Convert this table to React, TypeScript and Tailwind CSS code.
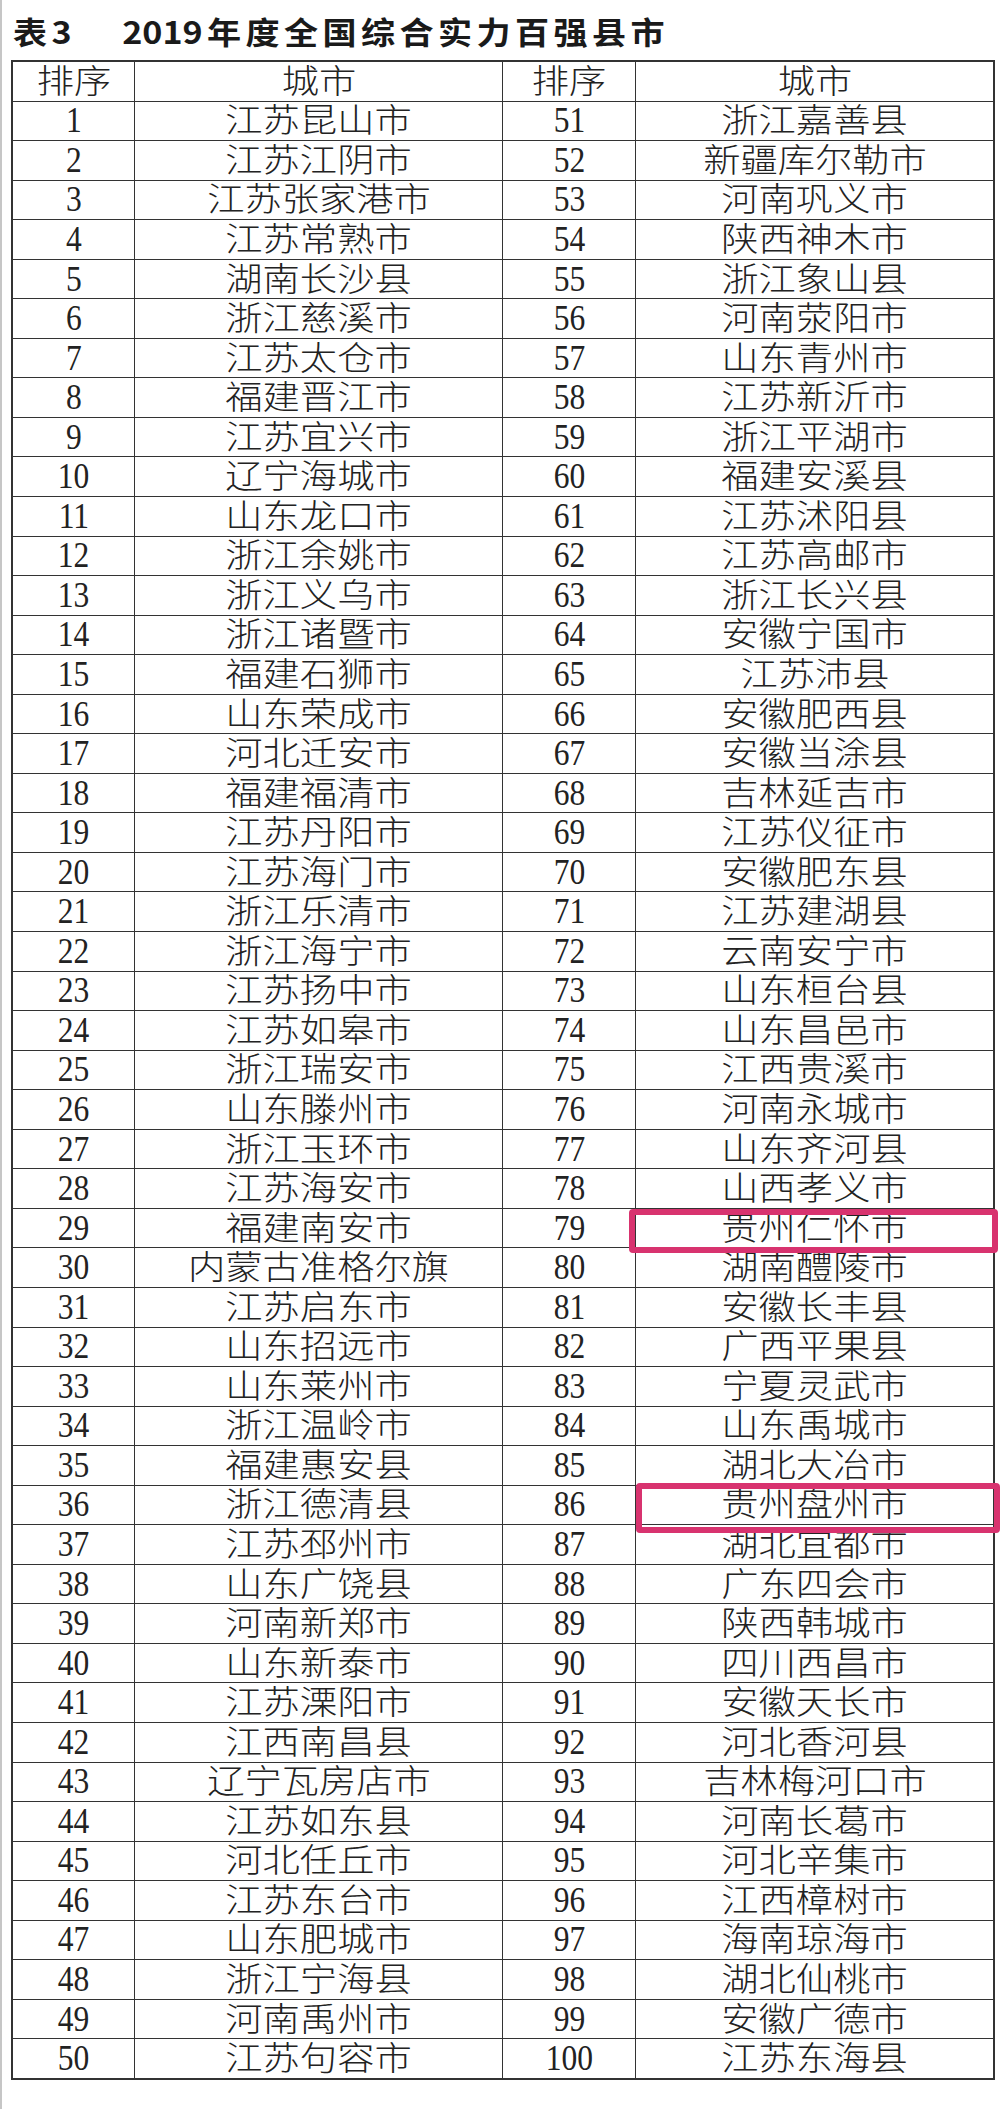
import React from 'react';

const left: [number, string][] = [
  [1, '江苏昆山市'], [2, '江苏江阴市'], [3, '江苏张家港市'], [4, '江苏常熟市'], [5, '湖南长沙县'],
  [6, '浙江慈溪市'], [7, '江苏太仓市'], [8, '福建晋江市'], [9, '江苏宜兴市'], [10, '辽宁海城市'],
  [11, '山东龙口市'], [12, '浙江余姚市'], [13, '浙江义乌市'], [14, '浙江诸暨市'], [15, '福建石狮市'],
  [16, '山东荣成市'], [17, '河北迁安市'], [18, '福建福清市'], [19, '江苏丹阳市'], [20, '江苏海门市'],
  [21, '浙江乐清市'], [22, '浙江海宁市'], [23, '江苏扬中市'], [24, '江苏如皋市'], [25, '浙江瑞安市'],
  [26, '山东滕州市'], [27, '浙江玉环市'], [28, '江苏海安市'], [29, '福建南安市'], [30, '内蒙古准格尔旗'],
  [31, '江苏启东市'], [32, '山东招远市'], [33, '山东莱州市'], [34, '浙江温岭市'], [35, '福建惠安县'],
  [36, '浙江德清县'], [37, '江苏邳州市'], [38, '山东广饶县'], [39, '河南新郑市'], [40, '山东新泰市'],
  [41, '江苏溧阳市'], [42, '江西南昌县'], [43, '辽宁瓦房店市'], [44, '江苏如东县'], [45, '河北任丘市'],
  [46, '江苏东台市'], [47, '山东肥城市'], [48, '浙江宁海县'], [49, '河南禹州市'], [50, '江苏句容市'],
];

const right: [number, string][] = [
  [51, '浙江嘉善县'], [52, '新疆库尔勒市'], [53, '河南巩义市'], [54, '陕西神木市'], [55, '浙江象山县'],
  [56, '河南荥阳市'], [57, '山东青州市'], [58, '江苏新沂市'], [59, '浙江平湖市'], [60, '福建安溪县'],
  [61, '江苏沭阳县'], [62, '江苏高邮市'], [63, '浙江长兴县'], [64, '安徽宁国市'], [65, '江苏沛县'],
  [66, '安徽肥西县'], [67, '安徽当涂县'], [68, '吉林延吉市'], [69, '江苏仪征市'], [70, '安徽肥东县'],
  [71, '江苏建湖县'], [72, '云南安宁市'], [73, '山东桓台县'], [74, '山东昌邑市'], [75, '江西贵溪市'],
  [76, '河南永城市'], [77, '山东齐河县'], [78, '山西孝义市'], [79, '贵州仁怀市'], [80, '湖南醴陵市'],
  [81, '安徽长丰县'], [82, '广西平果县'], [83, '宁夏灵武市'], [84, '山东禹城市'], [85, '湖北大冶市'],
  [86, '贵州盘州市'], [87, '湖北宜都市'], [88, '广东四会市'], [89, '陕西韩城市'], [90, '四川西昌市'],
  [91, '安徽天长市'], [92, '河北香河县'], [93, '吉林梅河口市'], [94, '河南长葛市'], [95, '河北辛集市'],
  [96, '江西樟树市'], [97, '海南琼海市'], [98, '湖北仙桃市'], [99, '安徽广德市'], [100, '江苏东海县'],
];

const bodyFont = { fontFamily: '"Liberation Serif", "Noto Sans CJK SC", serif' };
const titleFont = { fontFamily: '"Noto Sans CJK SC", sans-serif' };

const Num = ({ n }: { n: number | string }) => (
  <span style={bodyFont} className="inline-block text-[35px] leading-none scale-x-[0.9] text-[#222]">
    {n}
  </span>
);

const City = ({ name }: { name: string }) => (
  <span style={bodyFont} className="inline-block text-[33px] leading-none font-light scale-x-[1.13] translate-y-[1px] text-[#222]">
    {name}
  </span>
);

const cell = 'flex items-center justify-center';
const row = 'flex-1 grid grid-cols-[122px_368px_133px_357px]';

export default function App() {
  return (
    <div className="relative w-[1000px] h-[2109px] bg-white border-l-2 border-[#c6c6c6]">
      {/* TITLE */}
      <div className="h-[60px] flex items-center pl-[11px]">
        <div style={titleFont} className="inline-block origin-left scale-x-[1.1] text-[31px] font-bold leading-none text-[#1a1a1a] whitespace-nowrap">
          <span className="tracking-[4px]">表3</span>
          <span className="ml-[42px]">2019</span>
          <span className="ml-[4px] tracking-[4px]">年度全国综合实力百强县市</span>
        </div>
      </div>

      {/* TABLE */}
      <div className="ml-[9px] w-[984px] h-[2020px] border-2 border-[#333] flex flex-col">
        <div className={`${row} border-b border-[#333]`}>
          <div className={`${cell} border-r border-[#333]`}><City name="排序" /></div>
          <div className={`${cell} border-r border-[#333]`}><City name="城市" /></div>
          <div className={`${cell} border-r border-[#333]`}><City name="排序" /></div>
          <div className={cell}><City name="城市" /></div>
        </div>
        {left.map(([n, name], i) => (
          <div key={n} className={`${row} ${i < left.length - 1 ? 'border-b border-[#333]' : ''}`}>
            <div className={`${cell} border-r border-[#333]`}><Num n={n} /></div>
            <div className={`${cell} border-r border-[#333]`}><City name={name} /></div>
            <div className={`${cell} border-r border-[#333]`}><Num n={right[i][0]} /></div>
            <div className={cell}><City name={right[i][1]} /></div>
          </div>
        ))}
      </div>

      {/* HIGHLIGHTS */}
      <div className="absolute left-[627px] top-[1209px] w-[369px] h-[44px] border-[6px] border-[#d8336f] rounded-[4px]" />
      <div className="absolute left-[634px] top-[1483px] w-[364px] h-[50px] border-[6px] border-[#d8336f] rounded-[4px]" />
    </div>
  );
}
